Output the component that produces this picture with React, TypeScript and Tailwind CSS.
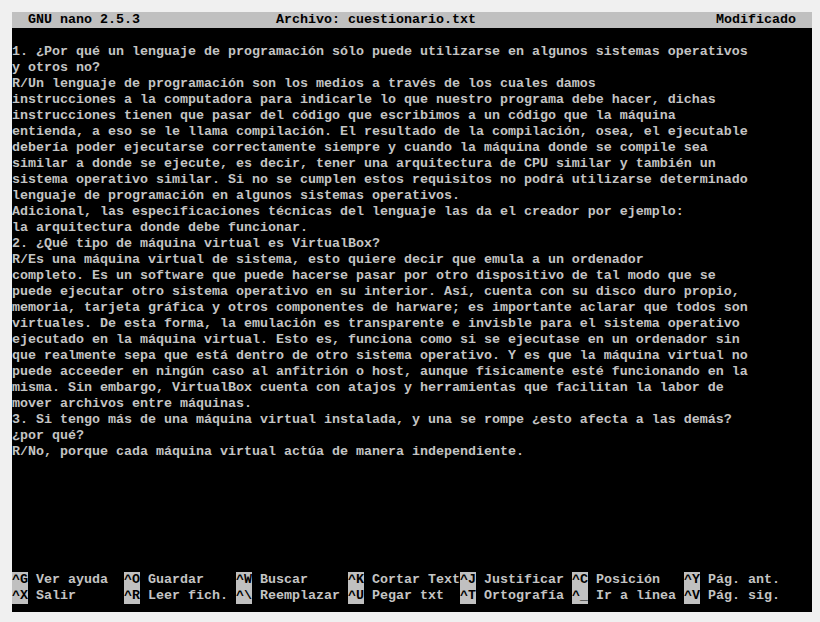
import React from 'react';

const lines = [
  '1. ¿Por qué un lenguaje de programación sólo puede utilizarse en algunos sistemas operativos',
  'y otros no?',
  'R/Un lenguaje de programación son los medios a través de los cuales damos',
  'instrucciones a la computadora para indicarle lo que nuestro programa debe hacer, dichas',
  'instrucciones tienen que pasar del código que escribimos a un código que la máquina',
  'entienda, a eso se le llama compilación. El resultado de la compilación, osea, el ejecutable',
  'debería poder ejecutarse correctamente siempre y cuando la máquina donde se compile sea',
  'similar a donde se ejecute, es decir, tener una arquitectura de CPU similar y también un',
  'sistema operativo similar. Si no se cumplen estos requisitos no podrá utilizarse determinado',
  'lenguaje de programación en algunos sistemas operativos.',
  'Adicional, las especificaciones técnicas del lenguaje las da el creador por ejemplo:',
  'la arquitectura donde debe funcionar.',
  '2. ¿Qué tipo de máquina virtual es VirtualBox?',
  'R/Es una máquina virtual de sistema, esto quiere decir que emula a un ordenador',
  'completo. Es un software que puede hacerse pasar por otro dispositivo de tal modo que se',
  'puede ejecutar otro sistema operativo en su interior. Así, cuenta con su disco duro propio,',
  'memoria, tarjeta gráfica y otros componentes de harware; es importante aclarar que todos son',
  'virtuales. De esta forma, la emulación es transparente e invisble para el sistema operativo',
  'ejecutado en la máquina virtual. Esto es, funciona como si se ejecutase en un ordenador sin',
  'que realmente sepa que está dentro de otro sistema operativo. Y es que la máquina virtual no',
  'puede acceeder en ningún caso al anfitrión o host, aunque físicamente esté funcionando en la',
  'misma. Sin embargo, VirtualBox cuenta con atajos y herramientas que facilitan la labor de',
  'mover archivos entre máquinas.',
  '3. Si tengo más de una máquina virtual instalada, y una se rompe ¿esto afecta a las demás?',
  '¿por qué?',
  'R/No, porque cada máquina virtual actúa de manera independiente.',
];

const shortcuts = [
  [
    ['^G', 'Ver ayuda'],
    ['^O', 'Guardar'],
    ['^W', 'Buscar'],
    ['^K', 'Cortar Text'],
    ['^J', 'Justificar'],
    ['^C', 'Posición'],
    ['^Y', 'Pág. ant.'],
  ],
  [
    ['^X', 'Salir'],
    ['^R', 'Leer fich.'],
    ['^\\', 'Reemplazar'],
    ['^U', 'Pegar txt'],
    ['^T', 'Ortografía'],
    ['^_', 'Ir a línea'],
    ['^V', 'Pág. sig.'],
  ],
];

export default function App() {
  return (
    <div className="w-[820px] h-[622px] bg-[#f0f0f0] p-[12px]">
      <div className="w-[800px] h-[600px] bg-black flex flex-col whitespace-pre font-['Liberation_Mono',monospace] text-[13.33px] leading-[16px] font-bold text-[#c4c4c4]">
        <div className="h-[16px] bg-[#c0c0c0] text-black flex">
          <span className="w-[264px] pl-[16px]">GNU nano 2.5.3</span>
          <span className="w-[440px]">Archivo: cuestionario.txt</span>
          <span>Modificado</span>
        </div>
        <div className="flex-1 pt-[16px]">
          {lines.map((l, i) => (
            <div key={i} className="h-[16px]">{l}</div>
          ))}
        </div>
        <div className="pb-[8px]">
          {shortcuts.map((row, r) => (
            <div key={r} className="h-[16px] flex">
              {row.map(([k, label]) => (
                <div key={k} className="w-[112px] flex">
                  <span className="bg-[#c0c0c0] text-black">{k}</span>
                  <span className="pl-[8px]">{label}</span>
                </div>
              ))}
            </div>
          ))}
        </div>
      </div>
    </div>
  );
}
